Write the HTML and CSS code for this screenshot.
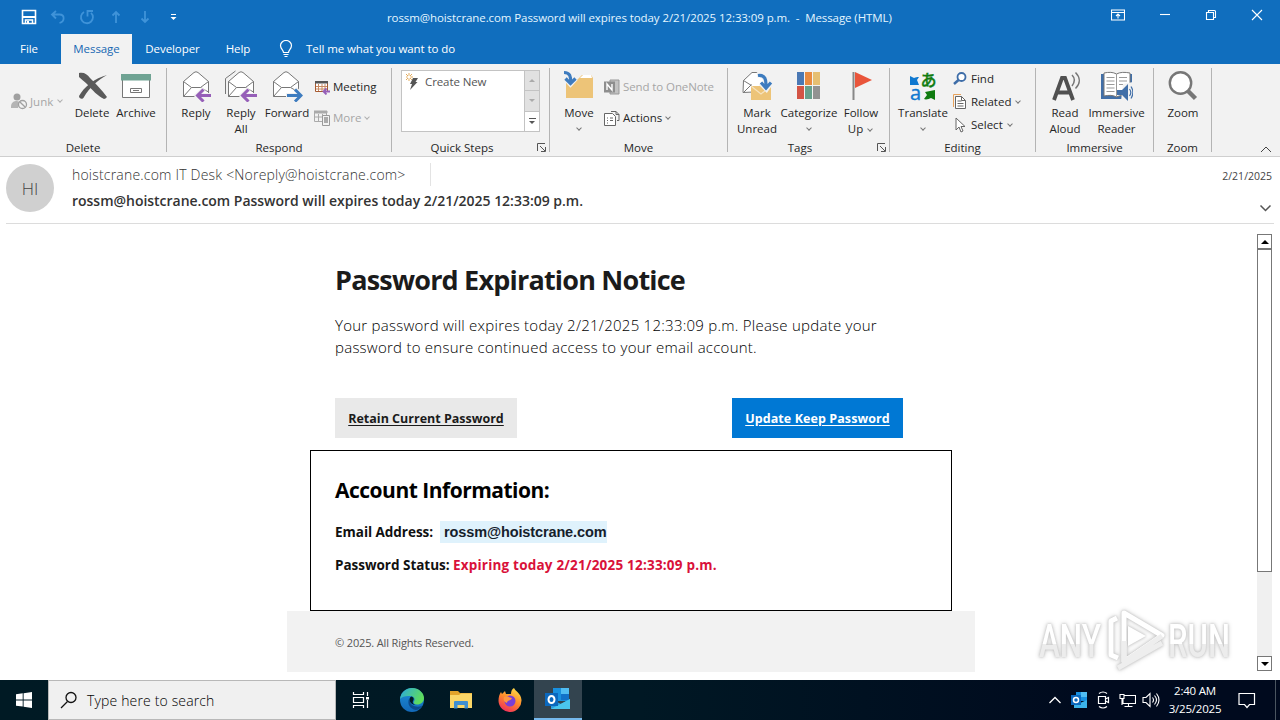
FILE: index.html
```html
<!DOCTYPE html>
<html lang="en">
<head>
<meta charset="utf-8">
<title>Message (HTML)</title>
<link rel="stylesheet" href="styles.css">
</head>
<body>
<div class="screen">
  <header class="titlebar">
    <div class="quick">
      <svg width="16" height="16" viewBox="0 0 16 16"><path d="M1.500 1.500h13v13h-13z" fill="none" stroke="#fff" stroke-width="1.600"/><path d="M2 8h12" stroke="#fff" stroke-width="2"/><path d="M4.500 15v-4h7v4" fill="none" stroke="#fff" stroke-width="1.500"/><path d="M6 12h2v2.500H6z" fill="#fff"/></svg>
      <svg class="dim" width="16" height="16" viewBox="0 0 16 16"><path d="M6 2L2 5.500l4 4M2.500 5.500H9.500c5.500 0 5.500 7 0 8.500" /></svg>
      <svg class="dim" width="16" height="16" viewBox="0 0 16 16"><path d="M5 3a6 6 0 1 0 7 .8M8.500 7.500V2h5.500" /></svg>
      <svg class="dim" width="16" height="16" viewBox="0 0 16 16"><path d="M8 14V3M4.500 6.500L8 3l3.500 3.500"/></svg>
      <svg class="dim" width="16" height="16" viewBox="0 0 16 16"><path d="M8 2v11M4.500 9.500L8 13l3.500-3.500"/></svg>
      <svg width="16" height="16" viewBox="0 0 16 16"><path d="M5 5.500h5" stroke="#fff"/><path d="M4.500 8h6l-3 3z" fill="#fff"/></svg>
    </div>
    <div class="caption">rossm@hoistcrane.com Password will expires today 2/21/2025 12:33:09 p.m. &nbsp;-&nbsp; Message (HTML)</div>
    <div class="winctl">
      <svg width="14" height="12" viewBox="0 0 14 12"><path d="M.5 1h13v10H.5zM.5 3.500h13M7 9.500V5M5 7l2-2 2 2"/></svg>
      <svg width="12" height="12" viewBox="0 0 12 12"><path d="M1 5.500h10"/></svg>
      <svg width="12" height="12" viewBox="0 0 12 12"><path d="M1.500 3.500h7v7h-7zM3.500 3V1.500h6q1 0 1 1v6H9"/></svg>
      <svg width="12" height="12" viewBox="0 0 12 12"><path d="M1 1l10 10M11 1L1 11"/></svg>
    </div>
  </header>

  <nav class="tabs">
    <span class="tab t-file">File</span>
    <span class="tab t-msg active">Message</span>
    <span class="tab t-dev">Developer</span>
    <span class="tab t-help">Help</span>
    <svg class="bulb" width="14" height="18" viewBox="0 0 14 18"><path d="M4.500 12.500c0-2.500-3-3.500-3-7a5.500 5 0 0 1 11 0c0 3.500-3 4.500-3 7zM4.500 14.500h5M5.500 16.500h3" fill="none" stroke="#fff" stroke-width="1.200"/></svg>
    <span class="tell">Tell me what you want to do</span>
  </nav>

  <section class="ribbon">
    <div class="group g-delete">
      <div class="tools">
        <div class="junk off">
          <svg width="17" height="17" viewBox="0 0 17 17"><circle cx="6" cy="4" r="3.500" fill="#a0a0a0"/><path d="M0 14c0-5 3-6 6-6l3 1-2 6H0z" fill="#b5b5b5"/><circle cx="11.500" cy="11.500" r="4" fill="#f2f2f2" stroke="#a0a0a0" stroke-width="1.300"/><path d="M8.700 8.700l5.600 5.600" stroke="#a0a0a0" stroke-width="1.300"/></svg>
          <span>Junk</span><i class="chev"></i>
        </div>
        <div class="big w42">
          <svg width="32" height="32" viewBox="0 0 32 32"><path d="M3 3c5-1 8 1 11 5 6 6 12 12 17 19-1 1-2 2-3 2-6-3-12-9-17-15C8 11 5 9 3 7z" fill="#5a5a5a"/><path d="M31 5C22 10 13 18 8 27c-1 3-5 2-5-1C8 17 19 8 31 5z" fill="#5a5a5a"/></svg>
          <span>Delete</span>
        </div>
        <div class="big w46">
          <svg width="32" height="32" viewBox="0 0 32 32"><path d="M2.500 9h27v18.500h-27z" fill="#fff" stroke="#777"/><path d="M1 4h30v6.500H1z" fill="#6fa393"/><path d="M10.500 18.500h11v4h-11z" fill="#fff" stroke="#777"/><path d="M13 20.500h6" stroke="#777"/></svg>
          <span>Archive</span>
        </div>
      </div>
      <div class="glabel">Delete</div>
    </div>

    <div class="group g-respond">
      <div class="tools">
        <div class="big w46">
          <svg width="32" height="32" viewBox="0 0 32 32"><path d="M3.500 11.500L14 2.500q2-1.500 4 0l10.500 9v15h-25z" fill="#fff" stroke="#777"/><path d="M3.500 11.500l8 6h9l8-6M3.500 26.500l8-9M28.500 22l-8-4.500" fill="none" stroke="#777"/><path d="M32 25.500H18M24 19l-7 6.500 7 6" fill="none" stroke="#f2f2f2" stroke-width="5"/><path d="M31 25.500H18M23.500 19.500l-6 6 6 6" fill="none" stroke="#965fb8" stroke-width="3"/></svg>
          <span>Reply</span>
        </div>
        <div class="big w44">
          <svg width="32" height="32" viewBox="0 0 32 32"><path d="M.5 24V8.500L10.500 1" fill="none" stroke="#777"/><path d="M3.500 11.500L14 2.500q2-1.500 4 0l10.500 9v15h-25z" fill="#fff" stroke="#777"/><path d="M3.500 11.500l8 6h9l8-6M3.500 26.500l8-9M28.500 22l-8-4.500" fill="none" stroke="#777"/><path d="M32 25.500H18M24 19l-7 6.500 7 6" fill="none" stroke="#f2f2f2" stroke-width="5"/><path d="M32 25.500H18M23.500 19.500l-6 6 6 6" fill="none" stroke="#965fb8" stroke-width="3"/></svg>
          <span>Reply<br>All</span>
        </div>
        <div class="big w48">
          <svg width="32" height="32" viewBox="0 0 32 32"><path d="M2.500 11.500L13 2.500q2-1.500 4 0l10.500 9v15h-25z" fill="#fff" stroke="#777"/><path d="M2.500 11.500l8 6h9l8-6M2.500 26.500l8-9M27.500 22l-8-4.500" fill="none" stroke="#777"/><path d="M15 25.500h14M24 19l7 6.500-7 6" fill="none" stroke="#f2f2f2" stroke-width="5"/><path d="M16 25.500h14M24 19.500l6 6-6 6" fill="none" stroke="#3e7cbf" stroke-width="3"/></svg>
          <span>Forward</span>
        </div>
        <div class="rows two">
          <div class="row"><svg width="16" height="16" viewBox="0 0 16 16"><path d="M1.500 2.500h12v10h-12z" fill="#fff" stroke="#a65b32"/><path d="M1 2h13v2.500H1z" fill="#555"/><path d="M4.500 5v7M8 5v7M11 5v7M2 7.500h11M2 10h11" stroke="#c98a62"/><path d="M16 12.500h-6M12.500 9.500l-3 3 3 3" stroke="#965fb8" stroke-width="1.800" fill="#f2f2f2"/></svg><span>Meeting</span></div>
          <div class="row off"><svg width="16" height="16" viewBox="0 0 16 16"><path d="M.5 1.500h12v10H.5z" fill="none" stroke="#aaa"/><path d="M0 1h13v2H0zM4.500 4v7M8.500 4v7M1 7h11" fill="#aaa" stroke="#aaa"/><path d="M8.500 5.500h7v10h-7z" fill="#f2f2f2" stroke="#999"/><path d="M10 7h4v6h-4z" fill="#aaa"/></svg><span>More</span><i class="chev"></i></div>
        </div>
      </div>
      <div class="glabel">Respond</div>
    </div>

    <div class="group g-quick">
      <div class="tools">
        <div class="gallery">
          <div class="gitem">
            <svg width="16" height="18" viewBox="0 0 16 18"><path d="M7 6h5l-2.500 4h2L4 18l2-6H4z" fill="#555"/><path d="M3 1v8M-1 5h8M0 2l6 6M6 2L0 8" stroke="#e0a24a" stroke-width=".9"/><circle cx="3" cy="5" r="1.500" fill="#fff"/></svg>
            <span>Create New</span>
          </div>
          <div class="gscroll"><b><i class="up"></i></b><b><i class="dn"></i></b><b class="on"><i class="bar"></i><i class="dn"></i></b></div>
        </div>
      </div>
      <div class="glabel">Quick Steps</div>
      <svg class="launch" width="9" height="9" viewBox="0 0 9 9"><path d="M.5 8V.5H8M3 3l5 5M8.500 4v4.500H4"/></svg>
    </div>

    <div class="group g-move">
      <div class="tools">
        <div class="big w46">
          <svg width="32" height="32" viewBox="0 0 32 32"><path d="M3 28V9h12l4-4h9l2 3v20z" fill="#edc478"/><path d="M17 8l3-3h8l1 3z" fill="#fff"/><path d="M0 2c7 0 8 4 8 10M2 8l5.500 6L13 8" fill="none" stroke="#f2f2f2" stroke-width="5"/><path d="M1 2.500c6 0 7 4 6.500 10M2.500 8.500l5 5 5-5" fill="none" stroke="#3e7cbf" stroke-width="3.200"/></svg>
          <span>Move</span><i class="chev"></i>
        </div>
        <div class="rows two">
          <div class="row off"><svg width="16" height="16" viewBox="0 0 16 16"><path d="M6 1h9v14H6z" fill="#c2c2c2" stroke="#999"/><path d="M0 2.500h11v11H0z" fill="#8e8e8e"/><path d="M3 11V5l5 6V5" fill="none" stroke="#fff" stroke-width="1.400"/></svg><span class="tight">Send to OneNote</span></div>
          <div class="row"><svg width="16" height="16" viewBox="0 0 16 16"><path d="M.5 3.500h8l3 3v9H.5z" fill="#fff" stroke="#666"/><path d="M3 8h1M6 8h3M3 10.500h1M6 10.500h3M3 13h1" stroke="#666"/><path d="M7 1.500h5l3 3v6h-2M12 1.500v3h3" fill="none" stroke="#666"/></svg><span>Actions</span><i class="chev"></i></div>
        </div>
      </div>
      <div class="glabel">Move</div>
    </div>

    <div class="group g-tags">
      <div class="tools">
        <div class="big w46">
          <svg width="32" height="32" viewBox="0 0 32 32"><path d="M2.500 10.500L11 2.500h5l7 7v12l-21 1z" fill="#fff" stroke="#777"/><path d="M2.500 10.500l8 5M2.500 22.500l8-8" stroke="#777"/><path d="M10 16h20v14H10z" fill="#edc478"/><path d="M10 16l10 8 10-8" fill="none" stroke="#f6e3bf" stroke-width="1.200"/><path d="M16 5c8-1 9 4 9 13M19.500 13l6 6 4-6" fill="none" stroke="#f2f2f2" stroke-width="5"/><path d="M17 5.500c7-1 8.500 4 8 12M20 12.500l5 5.500 5-5.500" fill="none" stroke="#3e7cbf" stroke-width="3.200"/></svg>
          <span>Mark<br>Unread</span>
        </div>
        <div class="big w58">
          <svg width="32" height="32" viewBox="0 0 32 32"><path d="M4 2h7v13H4z" fill="#4a78b4"/><path d="M12 2h7v13h-7z" fill="#e88b41"/><path d="M20 2h7v13h-7z" fill="#e6bf72"/><path d="M4 16h7v13H4z" fill="#d35445"/><path d="M12 16h7v13h-7z" fill="#67a08c"/><path d="M20 16h7v13h-7z" fill="#929292"/></svg>
          <span>Categorize</span><i class="chev"></i>
        </div>
        <div class="big w46">
          <svg width="32" height="32" viewBox="0 0 32 32"><path d="M8.500 2v28" stroke="#888" stroke-width="2"/><path d="M10 2l17 8-17 8z" fill="#e9553b"/></svg>
          <span>Follow<br>Up <i class="chev"></i></span>
        </div>
      </div>
      <div class="glabel">Tags</div>
      <svg class="launch" width="9" height="9" viewBox="0 0 9 9"><path d="M.5 8V.5H8M3 3l5 5M8.500 4v4.500H4"/></svg>
    </div>

    <div class="group g-edit">
      <div class="tools">
        <div class="big w50">
          <svg class="open" width="32" height="32" viewBox="0 0 32 32"><path d="M3 6l4 2c2-1 3-1 5-1l-2 3 2 5H3z" fill="#0f78d0"/><path d="M28 30l-4-2c-2 1-5 2-7 1l3-4-2-3 10-2z" fill="#107c10"/><text x="3" y="29.500" class="ico-a" fill="#0f78d0">a</text><text x="13.500" y="16" class="ico-jp" fill="#107c10">あ</text></svg>
          <span>Translate</span><i class="chev"></i>
        </div>
        <div class="rows three">
          <div class="row"><svg width="14" height="16" viewBox="0 0 14 16"><circle cx="8.500" cy="6" r="4" fill="#fff" stroke="#3e6da8" stroke-width="1.800"/><path d="M5.500 9L1 13" stroke="#3e6da8" stroke-width="2.500"/></svg><span>Find</span></div>
          <div class="row"><svg width="14" height="16" viewBox="0 0 14 16"><path d="M.5 13V.5H8" fill="none" stroke="#e8a35c"/><path d="M2.500 2.500h6l4 4v8h-10z" fill="#fff" stroke="#666"/><path d="M8.500 2.500v4h4M4.500 7h4M4.500 9.500h6M4.500 12h6" stroke="#666" fill="none"/></svg><span>Related</span><i class="chev"></i></div>
          <div class="row"><svg width="14" height="16" viewBox="0 0 14 16"><path d="M3 1v12l3-3 2 5 2-1-2-4.500h4z" fill="#fff" stroke="#666"/></svg><span>Select</span><i class="chev"></i></div>
        </div>
      </div>
      <div class="glabel">Editing</div>
    </div>

    <div class="group g-imm">
      <div class="tools">
        <div class="big w46">
          <svg width="32" height="32" viewBox="0 0 32 32"><path d="M5 30L13 8h3l8 22M8.500 22.500h12" fill="none" stroke="#505050" stroke-width="3.800"/><path d="M23 5c3 3 3 7 0 11M26.500 2.500c5 5 5 11 0 16" fill="none" stroke="#777" stroke-width="1.500"/></svg>
          <span>Read<br>Aloud</span>
        </div>
        <div class="big w58">
          <svg width="32" height="32" viewBox="0 0 32 32"><path d="M0 4h31v25H0z" fill="#416fa8"/><path d="M3 3c5-1 9-1 12.500 1C19 2 24 2 29 3v23c-5-1-10-1-13.500 1C12 25 8 25 3 26z" fill="#fff" stroke="#777"/><path d="M15.500 4v23M5.500 7.500h8M5.500 11h8M5.500 14.500h8M5.500 18h8M5.500 21.500h8M18 7.500h8M18 11h8M18 14.500h5" stroke="#999"/><path d="M22 14l10-2v19H20z" fill="#f2f2f2"/><path d="M16 20h5l6-6v17l-6-6h-5z" fill="#416fa8"/><path d="M28.500 19c1.500 2 1.500 5 0 7M30 16.500c2.500 4 2.500 8 0 12" fill="none" stroke="#416fa8" stroke-width="1.200"/></svg>
          <span>Immersive<br>Reader</span>
        </div>
      </div>
      <div class="glabel">Immersive</div>
    </div>

    <div class="group g-zoom">
      <div class="tools">
        <div class="big w48">
          <svg width="32" height="32" viewBox="0 0 32 32"><circle cx="13.500" cy="13" r="10.700" fill="#fff" stroke="#777" stroke-width="2.400"/><path d="M20.500 20.500l8 8" stroke="#777" stroke-width="4.500"/></svg>
          <span>Zoom</span>
        </div>
      </div>
      <div class="glabel">Zoom</div>
    </div>
    <svg class="collapse" width="12" height="7" viewBox="0 0 12 7"><path d="M1 6l5-5 5 5" fill="none" stroke="#444"/></svg>
  </section>

  <section class="mailhead">
    <div class="avatar">HI</div>
    <div class="who">
      <div class="from"><span>hoistcrane.com IT Desk &lt;Noreply@hoistcrane.com&gt;</span></div>
      <div class="subject">rossm@hoistcrane.com Password will expires today 2/21/2025 12:33:09 p.m.</div>
    </div>
    <div class="when">
      <span>2/21/2025</span>
      <svg width="13" height="8" viewBox="0 0 13 8"><path d="M1.500 1.500l5 5 5-5" fill="none" stroke="#555" stroke-width="1.500"/></svg>
    </div>
  </section>

  <main class="body">
    <article class="mail">
      <div class="notice">
        <h1>Password Expiration Notice</h1>
        <p><span class="l1">Your password will expires today 2/21/2025 12:33:09 p.m. Please update your</span><br><span class="l2">password to ensure continued access to your email account.</span></p>
        <div class="actions">
          <a class="btn grey"><span>Retain Current Password</span></a>
          <a class="btn blue"><span>Update Keep Password</span></a>
        </div>
      </div>
      <div class="account">
        <h2>Account Information:</h2>
        <div class="line"><span class="k1">Email Address:</span><span class="addr">rossm@hoistcrane.com</span></div>
        <div class="line"><span class="k2">Password Status:</span><span class="exp">Expiring today 2/21/2025 12:33:09 p.m.</span></div>
      </div>
      <footer class="foot"><span>© 2025. All Rights Reserved.</span></footer>
    </article>
    <div class="scroll">
      <b class="sb"><i class="up"></i></b>
      <b class="thumb"></b>
      <b class="track"></b>
      <b class="sb"><i class="dn"></i></b>
    </div>
    <svg class="mark open" width="204" height="70" viewBox="0 0 204 70">
      <defs><linearGradient id="wm" x1="0" y1="0" x2="0" y2="1"><stop offset=".55" stop-color="#fff"/><stop offset=".56" stop-color="#ececec"/></linearGradient></defs>
      <g fill="url(#wm)">
        <text x="5" y="51" textLength="62" lengthAdjust="spacingAndGlyphs">ANY</text>
        <text x="134" y="51" textLength="62" lengthAdjust="spacingAndGlyphs">RUN</text>
      </g>
      <path d="M90 56V7l38 22.500-38 26M83 12l-6 3v34l7 3" fill="none" stroke="#fff" stroke-width="5" stroke-linejoin="round"/>
      <path d="M90 35v21l38-26M84 62l44-25" fill="none" stroke="#eee" stroke-width="5" stroke-linejoin="round"/>
      <path d="M94 20l18 10-18 10z" fill="#fff"/>
    </svg>
  </main>

  <footer class="taskbar">
    <div class="start"><svg width="16" height="16" viewBox="0 0 16 16"><path d="M0 2.300L6.700 1.300v6.200H0zM7.600 1.200L16 0v7.500H7.600zM0 8.400h6.700v6.200L0 13.700zM7.600 8.400H16V16l-8.400-1.200z" fill="#fff"/></svg></div>
    <div class="search"><svg width="18" height="18" viewBox="0 0 18 18"><circle cx="11" cy="6.500" r="5" fill="none" stroke="#111" stroke-width="1.300"/><path d="M7.500 10.500L1 17" stroke="#111" stroke-width="1.300"/></svg><span>Type here to search</span></div>
    <div class="app a-view"><svg width="18" height="18" viewBox="0 0 18 18"><path d="M1.500 1v2.500h10V1M1.500 17v-2.500h10V17M1.500 6.500h10v5h-10zM15.500 1v4M15.500 9v8" fill="none" stroke="#fff" stroke-width="1.200"/><path d="M14 6h3v2.500h-3z" fill="#fff"/></svg></div>
    <div class="app"><svg width="26" height="26" viewBox="0 0 26 26"><defs><linearGradient id="e1" x1="0" y1="0" x2="1" y2=".4"><stop offset="0" stop-color="#2aa9e0"/><stop offset="1" stop-color="#5fdc5b"/></linearGradient><linearGradient id="e2" x1="0" y1="0" x2="0" y2="1"><stop offset="0" stop-color="#1d8fd8"/><stop offset="1" stop-color="#1268b8"/></linearGradient></defs><circle cx="13" cy="13" r="12" fill="url(#e2)"/><path d="M1 12C2 5 7 1 13 1c7 0 12 5 12 10 0 4-3 6.500-7 6.500-3 0-4-1.500-3-3 1.500-2 .5-5-3.500-5.500C7 8.500 3 9.500 1 12z" fill="url(#e1)"/><path d="M10 12c-2 5 1 10 7 11 3-.2 5-2 6.500-4.500-6 3-12 0-12.500-4z" fill="#0b4a8d"/><path d="M14 14c1.500-2 .5-4-1.500-4.500-2 .5-2.500 3-1.500 5 1 2.500 4 4 7 3.500-3 0-5-2-4-4z" fill="#001a24"/></svg></div>
    <div class="app"><svg width="22" height="20" viewBox="0 0 22 20"><path d="M0 1h8l2 2h12v4H0z" fill="#e3a32a"/><path d="M0 5h9l2-1.500h11V18H0z" fill="#fbd667"/><path d="M4 18.500V12q0-1 1-1h12q1 0 1 1v6.500h-3.500V15h-7v3.500z" fill="#3f8fd2"/></svg></div>
    <div class="app"><svg width="24" height="24" viewBox="0 0 24 24"><defs><linearGradient id="f1" x1=".8" y1="0" x2=".3" y2="1"><stop offset="0" stop-color="#ffe14a"/><stop offset=".5" stop-color="#ff8a2b"/><stop offset="1" stop-color="#f02d5c"/></linearGradient></defs><path d="M3 4l1 2 3-3 1 3 5 0c0-3 1-5 3-6 1 3 7 5 7.500 12A11.500 11.500 0 1 1 .5 13C.5 9 1.500 6 3 4z" fill="url(#f1)"/><circle cx="12" cy="13" r="5.500" fill="#7a3fd6"/><path d="M6 9c4-2 5 1 8 1-1 3-5 2-5 5-3-1-4-3-3-6z" fill="#ff9640"/></svg></div>
    <div class="app current"><svg width="26" height="24" viewBox="0 0 26 24"><path d="M8 1h16v13H8z" fill="#1890df"/><path d="M16 1h8v6h-8z" fill="#50bdf2"/><path d="M16 7h8v6h-8z" fill="#1172c9"/><path d="M6 12l10 5 9-5v10H6z" fill="#2a9de0"/><path d="M6 22l19-10v10z" fill="#4ac6ee"/><path d="M0 6h13v13H0z" fill="#0b68bd"/><ellipse cx="6.500" cy="12.500" rx="3" ry="3.500" fill="none" stroke="#fff" stroke-width="2"/></svg></div>
    <div class="tray">
      <span><svg width="14" height="14" viewBox="0 0 14 14"><path d="M1.500 10L7 4.500l5.500 5.500" fill="none" stroke="#fff" stroke-width="1.300"/></svg></span>
      <span><svg width="16" height="16" viewBox="0 0 16 16"><path d="M5 0h11v9H5z" fill="#1890df"/><path d="M10 0h6v5h-6z" fill="#50bdf2"/><path d="M3 8l6 3 7-3v8H3z" fill="#3cb4ea"/><path d="M0 3h10v10H0z" fill="#0b68bd"/><circle cx="5" cy="8" r="2.500" fill="none" stroke="#fff" stroke-width="1.500"/></svg></span>
      <span><svg width="14" height="18" viewBox="0 0 14 18"><path d="M2.500 5.500h7v7h-7zM9.500 8l3-1.500v5l-3-1.500M3 2.500q4-3 8 0M3 15.500q4 3 8 0" fill="none" stroke="#fff" stroke-width="1.200"/></svg></span>
      <span><svg width="17" height="16" viewBox="0 0 17 16"><path d="M5 3.500h11.500v8H4V7M9.500 12v2.500M5.500 14.500h8M1 2.500h4v4H1zM3 7v6" fill="none" stroke="#fff" stroke-width="1.100"/></svg></span>
      <span><svg width="18" height="16" viewBox="0 0 18 16"><path d="M1 5.500h3l4-4v13l-4-4H1zM10.500 5.500q2 2.500 0 5M12.500 3.500q4 4.500 0 9M14.500 1.500q5 6.500 0 13" fill="none" stroke="#fff" stroke-width="1.100"/></svg></span>
    </div>
    <div class="clock"><span>2:40 AM</span><span class="d">3/25/2025</span></div>
    <svg class="note" width="18" height="17" viewBox="0 0 18 17"><path d="M1 1.500h15.500v11h-5L9 15.500l-2.500-3H1z" fill="none" stroke="#fff" stroke-width="1.200"/></svg>
    <i class="peek"></i>
  </footer>
</div>
</body>
</html>
```
FILE: styles.css
```css
* { box-sizing: border-box; }
body {
  margin: 0;
  background: #fff;
  font-family: "Open Sans", "Noto Sans", sans-serif;
  font-size: 11.5px;
  color: #262626;
}
svg { flex: none; display: block; }
.open { overflow: visible; }
.screen { width: 1280px; height: 720px; display: flex; flex-direction: column; overflow: hidden; }

/* title bar */
.titlebar { height: 34px; background: #106ebe; display: flex; align-items: center; justify-content: space-between; color: #e4f6ff; }
.quick { display: flex; gap: 13px; padding-left: 21px; width: 387px; }
.dim { fill: none; stroke: #3f93d9; stroke-width: 1.8; }
.caption { white-space: nowrap; letter-spacing: -.09px; padding-bottom: 0; }
.winctl { display: flex; align-items: center; gap: 34px; padding: 0 17px 4px 0; margin-left: auto; }
.winctl svg { fill: none; stroke: #fff; stroke-width: 1.1; }

/* tabs */
.tabs { height: 30px; background: #106ebe; display: flex; align-items: center; color: #fff; letter-spacing: -.08px; }
.tab { height: 30px; line-height: 29px; text-align: center; }
.t-file { width: 58px; }
.t-msg { width: 71px; margin-left: 3px; }
.t-dev { width: 81px; }
.t-help { width: 50px; }
.active { background: #f2f2f2; color: #1668b3; }
.bulb { margin-left: 16px; }
.tell { margin-left: 13px; padding-bottom: 2px; }

/* ribbon */
.ribbon { height: 93px; background: #f2f2f2; border-bottom: 1px solid #cfcfcf; display: flex; padding-top: 4px; position: relative; }
.group { height: 84px; border-right: 1px solid #b4b4b4; display: flex; flex-direction: column; position: relative; }
.tools { height: 76px; display: flex; padding-top: 2px; }
.glabel { line-height: 8px; text-align: center; }
.g-delete { width: 167px; }
.g-respond { width: 225px; }
.g-quick { width: 158px; }
.g-move { width: 178px; }
.g-tags { width: 162px; }
.g-edit { width: 146px; }
.g-imm { width: 118px; }
.g-zoom { width: 58px; }
.g-respond .tools { padding-left: 6px; }
.g-move .tools { padding-left: 6px; }
.g-tags .tools { padding-left: 6px; }
.g-edit .tools { padding-left: 8px; }
.g-imm .tools { padding-left: 6px; }
.g-zoom .tools { padding-left: 5px; }
.g-quick .glabel, .g-tags .glabel { padding-right: 17px; }
.big { display: flex; flex-direction: column; align-items: center; gap: 3px; }
.big span { line-height: 16px; text-align: center; white-space: nowrap; }
.w42 { width: 42px; }
.w44 { width: 44px; }
.w46 { width: 46px; }
.w48 { width: 48px; }
.w50 { width: 50px; }
.w58 { width: 58px; }
.g-imm .w58 { width: 57px; }
.junk { width: 71px; padding: 0 0 12px 11px; display: flex; align-items: center; gap: 2px; }
.off { color: #a6a6a6; }
.chev { display: inline-block; width: 4px; height: 4px; border: solid #777; border-width: 0 1px 1px 0; transform: rotate(45deg); flex: none; margin: 0 2px 2px 3px; }
.big > .chev { margin: 2px 0 0; }
.big span .chev { margin-left: 2px; }
.off .chev { border-color: #b0b0b0; }
.rows { display: flex; flex-direction: column; margin-left: 2px; }
.g-respond .rows { margin-left: 3px; }
.row { display: flex; align-items: center; gap: 3px; white-space: nowrap; }
.row .chev { margin-left: 1px; }
.two .row { height: 31px; }
.two { padding-top: 1px; }
.three .row { height: 23px; }
.three { margin-left: 5px; margin-top: -3px; }
.tight { letter-spacing: -.1px; }
.g-edit .row { gap: 4px; }
.gallery { margin-left: 9px; width: 139px; height: 62px; background: #fff; border: 1px solid #c3c3c3; display: flex; justify-content: space-between; }
.gitem { display: flex; gap: 3px; padding-left: 4px; height: 20px; align-items: center; color: #555; letter-spacing: -.1px; }
.gscroll { width: 15px; display: flex; flex-direction: column; border-left: 1px solid #c3c3c3; }
.gscroll b { flex: 1; background: #e1e1e1; border-bottom: 1px solid #c3c3c3; display: flex; flex-direction: column; gap: 2px; align-items: center; justify-content: center; }
.gscroll .on { background: #fff; border: 0; }
.up, .dn { width: 0; height: 0; border: 3px solid transparent; }
.up { border-top: 0; border-bottom-color: #aaa; }
.dn { border-bottom: 0; border-top-color: #aaa; }
.on .dn { border-top-color: #555; }
.bar { width: 7px; height: 1px; background: #555; }
.launch { position: absolute; right: 3px; bottom: 0; fill: none; stroke: #555; }
.collapse { position: absolute; right: 8px; bottom: 3px; }
.ico-a { font: 20px "Open Sans", sans-serif; stroke: #0f78d0; stroke-width: .4px; }
.ico-jp { font: 500 16px "Noto Sans CJK JP", sans-serif; stroke: #107c10; stroke-width: .4px; }

/* message header */
.mailhead { height: 67px; margin: 0 6px; border-bottom: 1px solid #dcdcdc; display: flex; padding: 7px 2px 0 0; }
.avatar { width: 48px; height: 48px; border-radius: 50%; background: #d0d0d0; color: #444; font-size: 17px; font-weight: 300; line-height: 49px; text-align: center; }
.who { margin-left: 18px; }
.from { height: 23px; line-height: 24px; width: 359px; border-right: 1px solid #e3e3e3; font-size: 14px; color: #333; white-space: nowrap; font-weight: 300; margin-top: -1px; letter-spacing: .2px; }
.subject { font-size: 14px; line-height: 20px; margin-top: 5px; font-weight: 600; color: #333; white-space: nowrap; letter-spacing: -.02px; }
.when { margin-left: auto; display: flex; flex-direction: column; align-items: flex-end; font-size: 10.5px; color: #444; line-height: 24px; letter-spacing: 0; }
.when svg { margin-top: 16px; }

/* reading pane */
.body { height: 456px; position: relative; display: flex; justify-content: space-between; }
.mail { width: 688px; margin-left: 287px; height: 448px; display: flex; flex-direction: column; overflow: hidden; }
.notice { height: 226px; padding: 36px 72px 0 48px; }
h1 { margin: 0; font-size: 27px; line-height: 40px; font-weight: 700; color: #1b1b1b; letter-spacing: -.8px; white-space: nowrap; }
.notice p { margin: 14px 0 0; font-size: 15px; line-height: 22px; font-weight: 300; color: #000; white-space: nowrap; letter-spacing: .25px; }
.actions { margin-top: 40px; display: flex; justify-content: space-between; }
.btn { height: 40px; line-height: 41px; text-align: center; font-size: 12.5px; font-weight: 700; text-decoration: underline; text-underline-offset: 2px; white-space: nowrap; }
.grey { width: 182px; background: #e9e9e9; color: #1b1b1b; }
.blue { width: 171px; background: #0078d4; color: #fff; letter-spacing: .08px; }
.account { margin: 0 23px; height: 161px; border: 1px solid #000; padding: 23px 24px; }
h2 { margin: 0 0 15px; font-size: 21px; line-height: 32px; font-weight: 700; color: #000; letter-spacing: -.5px; }
.line { display: flex; font-size: 13.5px; line-height: 22px; font-weight: 700; color: #111; white-space: nowrap; }
.line + .line { margin-top: 11px; }
.k1 { width: 105px; letter-spacing: -.03px; }
.k2 { width: 118px; letter-spacing: -.02px; }
.addr { background: #dff2fc; padding-left: 4px; width: 167px; font-family: "Liberation Sans", Arial, sans-serif; font-size: 14.5px; letter-spacing: -.12px; color: #15202b; }
.exp { color: #d9113a; letter-spacing: .2px; }
.foot { height: 61px; background: #f2f2f2; padding: 22px 48px; font-size: 11px; line-height: 20px; color: #555; letter-spacing: -.14px; }
.scroll { width: 15px; height: 437px; margin: 10px 8px 0 0; display: flex; flex-direction: column; background: #f0f0f0; }
.sb { height: 15px; border: 1px solid #777; background: #fff; display: flex; align-items: center; justify-content: center; }
.scroll .up, .scroll .dn { border-left-width: 4px; border-right-width: 4px; }
.scroll .up { border-bottom: 4px solid #000; }
.scroll .dn { border-top: 4px solid #000; }
.thumb { height: 323px; border: 1px solid #777; background: #fff; }
.track { flex: 1; }
.mark { position: absolute; left: 1034px; top: 382px; filter: drop-shadow(0 0 1px #c4c4c4) drop-shadow(0 0 2px #ccc); }
.mark text { font: 500 46px "Roboto", sans-serif; }

/* taskbar */
.taskbar { height: 40px; background: linear-gradient(90deg, #001a24, #001824 50%, #000a1e 85%); display: flex; align-items: center; }
.start { width: 48px; display: flex; justify-content: center; }
.search { width: 288px; height: 40px; background: #f0f0f0; border: 1px solid #b8b8b8; display: flex; align-items: center; gap: 9px; padding-left: 11px; font-size: 14px; font-weight: 300; letter-spacing: .15px; color: #000; }
.app { width: 49px; height: 40px; display: flex; align-items: center; justify-content: center; }
.a-view { width: 51px; padding-right: 2px; }
.current { background: #33444f; border-bottom: 2px solid #76b9ed; width: 48px; }
.tray { margin-left: auto; display: flex; align-items: center; }
.tray span { width: 24px; display: flex; justify-content: center; }
.clock { width: 64px; color: #fff; text-align: center; display: flex; flex-direction: column; line-height: 18px; letter-spacing: -.2px; }
.note { margin: 0 19px 0 11px; }
.peek { width: 5px; height: 40px; border-left: 1px solid #4a5560; }
```
